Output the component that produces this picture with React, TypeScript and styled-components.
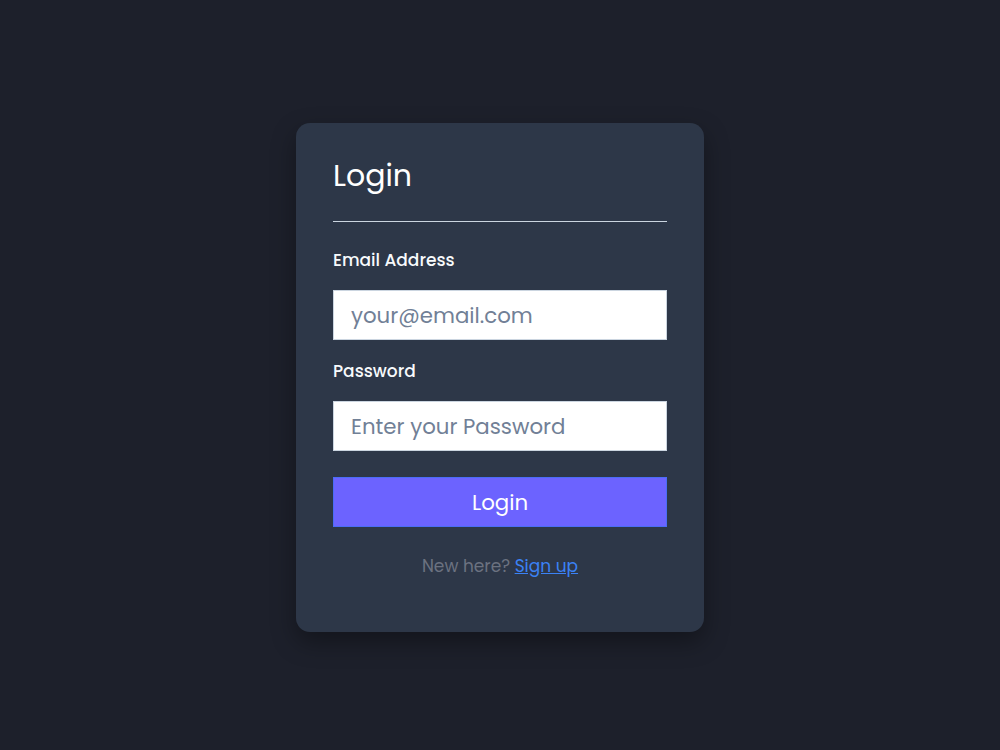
import styled, { createGlobalStyle } from 'styled-components';

const GlobalStyle = createGlobalStyle`
    * { box-sizing: border-box; }
    body {
        margin: 0;
        background-color: #1d202b;
        font-family: Poppins, "Open Sans", "Liberation Sans", sans-serif;
    }
`;

const Page = styled.div`
    min-height: 100vh;
    padding-top: 5px;
    display: flex;
    justify-content: center;
    align-items: center;
`;

const Card = styled.form`
    width: 408px;
    padding: 35px 37px 54px;
    background-color: #2d3748;
    border-radius: 14px;
    box-shadow: 0 10px 25px rgba(0, 0, 0, 0.35);
    display: flex;
    flex-direction: column;
`;

const Title = styled.h1`
    margin: 0;
    font-size: 30px;
    line-height: 36px;
    font-weight: 400;
    color: #ffffff;
`;

const Divider = styled.hr`
    margin: 27px 0 26px;
    border: none;
    height: 1px;
    background-color: #cbd5e0;
`;

const Label = styled.label`
    font-size: 17px;
    line-height: 24px;
    font-weight: 500;
    color: #f7fafc;
    margin-bottom: 18px;
`;

const Input = styled.input`
    height: 50px;
    width: 100%;
    padding: 0 17px;
    border: 1px solid #cbd5e0;
    background: #ffffff;
    font-family: inherit;
    font-size: 21.3px;
    color: #2d3748;
    margin-bottom: ${props => props.$last ? '26px' : '19px'};
    outline: none;
    &::placeholder {
        color: #718096;
    }
`;

const Button = styled.button`
    height: 50px;
    width: 100%;
    border: 1px solid #4a6cf7;
    background-color: #6c63ff;
    color: #ffffff;
    font-family: inherit;
    font-size: 21.3px;
    cursor: pointer;
`;

const Footer = styled.p`
    margin: 27px 0 0;
    text-align: center;
    font-size: 17px;
    line-height: 24px;
    color: #6b7280;
    a {
        color: #3b82f6;
        text-decoration: underline;
    }
`;

function App() {
    return (
        <Page>
            <GlobalStyle />
            <Card onSubmit={e => e.preventDefault()}>
                <Title>Login</Title>
                <Divider />
                <Label htmlFor="email">Email Address</Label>
                <Input id="email" type="email" placeholder="your@email.com" />
                <Label htmlFor="password">Password</Label>
                <Input id="password" type="password" placeholder="Enter your Password" $last />
                <Button type="submit">Login</Button>
                <Footer>
                    New here? <a href="#">Sign up</a>
                </Footer>
            </Card>
        </Page>
    );
}

export default App;
